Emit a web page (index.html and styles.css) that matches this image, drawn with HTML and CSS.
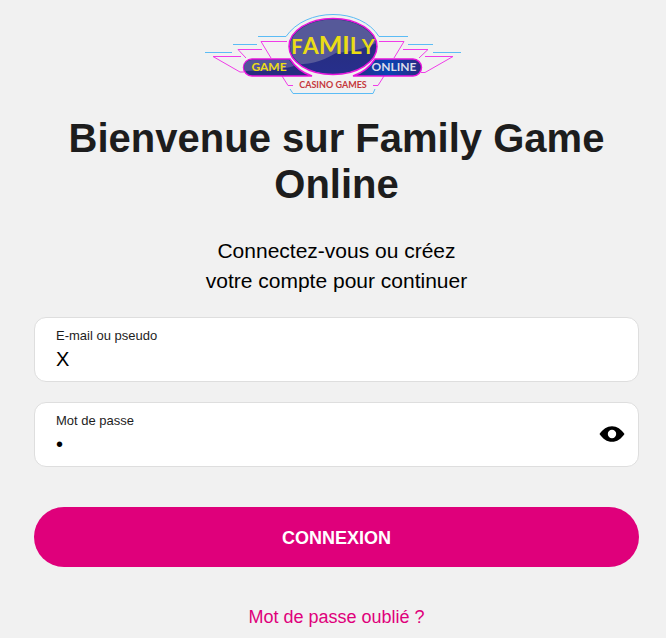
FILE: index.html
```html
<!DOCTYPE html>
<html lang="fr">
<head>
  <meta charset="UTF-8">
  <meta name="viewport" content="width=device-width, initial-scale=1.0">
  <title>Family Game Online - Connexion</title>
  <link rel="stylesheet" href="styles.css">
</head>
<body>

  <main class="login">
    <!-- Logo -->
    <svg class="logo" viewBox="0 0 273 88" role="img" aria-label="Family Game Online">
      <defs>
        <linearGradient id="oval" x1="0" y1="0" x2="0" y2="1">
          <stop offset="0" stop-color="#272c78"/>
          <stop offset="1" stop-color="#272f8c"/>
        </linearGradient>
        <linearGradient id="pill" x1="0" y1="0" x2="1" y2="0">
          <stop offset="0" stop-color="#2a2a80"/>
          <stop offset="0.5" stop-color="#0844b4"/>
          <stop offset="1" stop-color="#2a2a80"/>
        </linearGradient>
        <clipPath id="oval-clip">
          <ellipse cx="133" cy="36.500" rx="43" ry="27"/>
        </clipPath>
      </defs>
      <g class="blue-lines">
        <path d="M5 42.500H32M33 34.500H57M58 26.500H86C96 12 114 4.500 133 4.500S170 12 179 26.500H208M208 34.500H233M233 42.500H261"/>
        <path d="M90 79L93 83.500H173L175 79"/>
      </g>
      <g class="pink-lines">
        <path d="M87 31.500H61L71 48M62 39.500H38L46 48M41 46.500H13L40 62H44M82 66L88 75.500H93"/>
        <path d="M179 31.500H204L194 48M203 39.500H228L219 48M225 46.500H253L225 62.500H221M184 66L178 75.500H173"/>
      </g>
      <path class="outlined" fill="#272c80" d="M52 49H90C95 57 103 63 112 66H52A8.500 8.500 0 0 1 52 49Z"/>
      <path fill="#53549a" d="M52 50H89L94 56C80 60 62 61 45 61C42 55 46 50 52 50Z"/>
      <path class="outlined" fill="url(#pill)" d="M213 49H175C170 57 162 63 153 66H213A8.500 8.500 0 0 0 213 49Z"/>
      <ellipse class="outlined" cx="133" cy="36.500" rx="44" ry="28" fill="url(#oval)"/>
      <path clip-path="url(#oval-clip)" fill="#565999" d="M88 8H178V32C164 39 150 42 136 43C120 53 107 54 94 55H88Z"/>
      <text class="family" x="133" y="44"><tspan class="small">F</tspan><tspan class="medium">A</tspan><tspan>MI</tspan><tspan class="medium">L</tspan><tspan class="small">Y</tspan></text>
      <text class="game" x="69" y="61">GAME</text>
      <text class="online" x="194" y="61">ONLINE</text>
      <text class="casino" x="133" y="78">CASINO GAMES</text>
    </svg>

    <h1>Bienvenue sur Family Game Online</h1>
    <p class="intro">Connectez-vous ou créez<br>votre compte pour continuer</p>

    <!-- Login form -->
    <form class="login-form">
      <div class="field">
        <div class="field-text">
          <label for="login">E-mail ou pseudo</label>
          <input type="text" id="login" value="X">
        </div>
      </div>

      <div class="field">
        <div class="field-text">
          <label for="password">Mot de passe</label>
          <input type="password" id="password" value="x">
        </div>
        <button type="button" class="toggle" aria-label="Afficher le mot de passe">
          <svg viewBox="0 0 26 16" width="26" height="16">
            <path fill-rule="evenodd" d="M0.500 8C4 3 8 0.200 13 0.200S22 3 25.500 8C22 13 18 15.800 13 15.800S4 13 0.500 8ZM13 3.800A4.200 4.200 0 1 0 13 12.200A4.200 4.200 0 1 0 13 3.800Z"/>
          </svg>
        </button>
      </div>

      <button type="submit" class="btn">CONNEXION</button>
    </form>

    <a href="#" class="forgot">Mot de passe oublié ?</a>
  </main>

  <script>
    // Show or hide the password
    var password = document.getElementById("password");

    document.querySelector(".toggle").onclick = function() {
      password.type = password.type === "password" ? "text" : "password";
    }
  </script>

</body>
</html>
```
FILE: styles.css
```css
* {
  margin: 0;
  padding: 0;
  box-sizing: border-box;
}

body {
  font-family: "Liberation Sans", Arial, sans-serif;
  background-color: #f1f1f1;
  color: #000;
}

.login {
  display: flex;
  flex-direction: column;
  align-items: center;
  padding: 10px 27px 8px 34px;
  text-align: center;
}

/* Logo */
.logo {
  width: 273px;
  height: 88px;
  margin-bottom: 17px;
}

.blue-lines {
  fill: none;
  stroke: #5bbcf5;
}

.pink-lines {
  fill: none;
  stroke: #f03ce8;
}

.outlined {
  stroke: #e815dc;
  stroke-width: 1.5;
}

.logo text {
  font-family: Lato, sans-serif;
  font-weight: bold;
  text-anchor: middle;
}

.logo .family {
  font-size: 25px;
  fill: #ebdc16;
}

.logo .medium {
  font-size: 23px;
}

.logo .small {
  font-size: 20px;
}

.logo .game {
  font-size: 12px;
  fill: #ebdc16;
}

.logo .online {
  font-size: 12px;
  fill: #dcdcea;
}

.logo .casino {
  font-size: 9px;
  fill: #c5383c;
}

/* Headings */
h1 {
  margin-bottom: 29px;
  font-size: 40px;
  line-height: 46px;
  color: #1d1d1d;
}

.intro {
  margin-bottom: 21px;
  font-size: 21px;
  line-height: 30px;
}

/* Form */
.login-form {
  width: 100%;
}

.field {
  display: flex;
  align-items: center;
  margin-bottom: 20px;
  padding: 10px 13px 7px 21px;
  background-color: #fff;
  border: 1px solid #dedede;
  border-radius: 12px;
}

.field-text {
  flex: 1;
  text-align: left;
}

.field label {
  display: block;
  font-size: 13px;
  line-height: 16px;
  color: #1d1d1d;
}

.field input {
  display: block;
  width: 100%;
  height: 30px;
  border: none;
  outline: none;
  background: none;
  font-family: inherit;
  font-size: 20px;
}

.toggle {
  display: flex;
  padding-bottom: 4px;
  border: none;
  background: none;
  cursor: pointer;
}

.btn {
  width: 100%;
  height: 60px;
  margin: 20px 0 40px;
  padding-top: 2px;
  border: none;
  border-radius: 30px;
  background-color: #df007b;
  color: #fff;
  font-family: inherit;
  font-size: 18px;
  font-weight: bold;
  cursor: pointer;
}

.forgot {
  font-size: 18px;
  color: #df007b;
  text-decoration: none;
}
```
